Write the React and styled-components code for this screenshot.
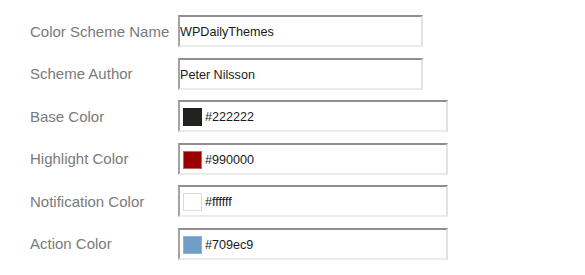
import React from "react";
import styled, { createGlobalStyle } from "styled-components";

const Global = createGlobalStyle`
  html, body { margin: 0; padding: 0; background: #ffffff; }
  body { font-family: "Liberation Sans", Arial, sans-serif; }
`;

const Form = styled.div`
  display: grid;
  grid-template-columns: 148px auto;
  grid-auto-rows: 32px;
  row-gap: 10.6px;
  padding: 15px 0 0 30px;
  width: 585px;
  height: 275px;
  box-sizing: border-box;
  background: #fff;
`;

const Label = styled.label`
  display: flex;
  align-items: center;
  font-size: 15px;
  color: #7a7a7a;
  white-space: nowrap;
`;

const Field = styled.div`
  box-sizing: border-box;
  width: ${(p) => (p.$wide ? 270 : 245)}px;
  height: 32px;
  display: flex;
  align-items: center;
  gap: 3px;
  padding: 2px ${(p) => (p.$wide ? 3 : 0)}px 0;
  border-top: 2px solid #8f8f8f;
  border-left: 2px solid #a3a3a3;
  border-right: 2px solid #e2e2e2;
  border-bottom: 2px solid #ebebeb;
  background: #fff;
  font-size: 12.6px;
  color: #1a1a1a;
`;

const Swatch = styled.span`
  box-sizing: border-box;
  width: 19px;
  height: 18px;
  flex: none;
  background: ${(p) => p.$color};
  border: 1px solid ${(p) => p.$edge};
`;

const rows = [
  { label: "Color Scheme Name", value: "WPDailyThemes" },
  { label: "Scheme Author", value: "Peter Nilsson" },
  { label: "Base Color", value: "#222222", color: "#222222", edge: "#1e1e1e" },
  { label: "Highlight Color", value: "#990000", color: "#990000", edge: "#c06060" },
  { label: "Notification Color", value: "#ffffff", color: "#ffffff", edge: "#dcdcdc" },
  { label: "Action Color", value: "#709ec9", color: "#709ec9", edge: "#8fb3d6" },
];

export default function App() {
  return (
    <>
      <Global />
      <Form>
        {rows.map((r) => (
          <React.Fragment key={r.label}>
            <Label>{r.label}</Label>
            <Field $wide={!!r.color}>
              {r.color && <Swatch $color={r.color} $edge={r.edge} />}
              <span>{r.value}</span>
            </Field>
          </React.Fragment>
        ))}
      </Form>
    </>
  );
}
